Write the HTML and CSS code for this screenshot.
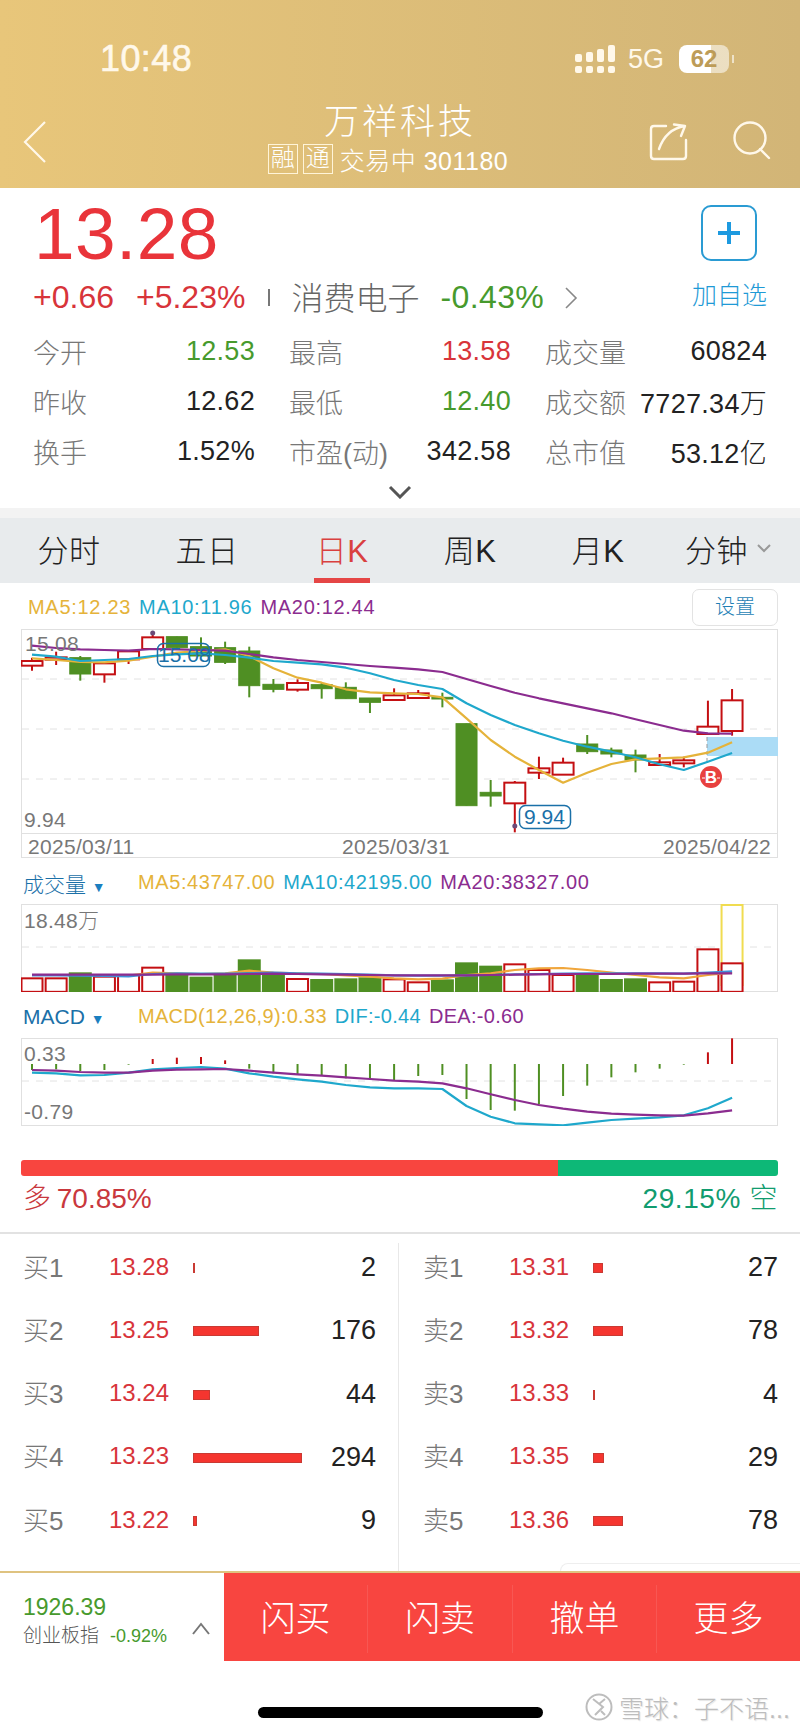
FILE: index.html
```html
<!DOCTYPE html>
<html lang="zh-CN">
<head>
    <meta charset="UTF-8">
    <meta name="viewport" content="width=device-width, initial-scale=1.0">
    <title>万祥科技</title>
    <link rel="stylesheet" href="styles.css">
</head>
<body>
<div class="page">
    <header class="topbar">
        <div class="status">
            <span class="clock">10:48</span>
            <div class="status-right">
                <svg class="signal" viewBox="574 44 40 30" width="40" height="30">
                    <rect x="574" y="54" width="7" height="8" rx="2"/><rect x="585" y="52" width="7" height="10" rx="2"/><rect x="596" y="49" width="7" height="13" rx="2"/><rect x="607" y="45" width="7" height="17" rx="2"/>
                    <rect x="574" y="66" width="7" height="7" rx="2"/><rect x="585" y="66" width="7" height="7" rx="2"/><rect x="596" y="66" width="7" height="7" rx="2"/><rect x="607" y="66" width="7" height="7" rx="2"/>
                </svg>
                <span class="net">5G</span>
                <div class="battery"><span>62</span></div>
                <i class="battery-nub"></i>
            </div>
        </div>
        <div class="nav">
            <svg class="back" viewBox="20 118 30 48" width="30" height="48"><path d="M45 122 L25 142 L45 162"/></svg>
            <div class="nav-title">
                <h1>万祥科技</h1>
                <div class="nav-sub"><b>融</b><b>通</b><span>交易中 301180</span></div>
            </div>
            <div class="nav-icons">
                <svg viewBox="648 120 44 42" width="44" height="42"><path d="M667 126 H655 q-3 0-3 3 V156 q0 3 3 3 H684 q3 0 3-3 V140"/><path d="M660 149 Q667 129 686 126 M675 124.5 L686 126 L682 136"/></svg>
                <svg viewBox="732 120 40 40" width="40" height="40"><circle cx="750" cy="138" r="15.5"/><path d="M760 149 L769 158"/></svg>
            </div>
        </div>
    </header>

    <section class="quote">
        <div class="price-row">
            <div class="price">13.28</div>
            <div class="add-btn"><svg viewBox="0 0 26 26" width="26" height="26"><path d="M13 2 V24 M2 13 H24"/></svg></div>
        </div>
        <div class="change-row">
            <span class="red chg-a">+0.66</span>
            <span class="red chg-b">+5.23%</span>
            <i class="sep"></i>
            <span class="sector">消费电子</span>
            <span class="green chg-c">-0.43%</span>
            <svg class="more" viewBox="0 0 14 24" width="14" height="24"><path d="M2 2 L12 12 L2 22"/></svg>
            <span class="add-text">加自选</span>
        </div>
        <div class="stats">
            <div><label>今开</label><span class="green">12.53</span></div>
            <div><label>最高</label><span class="red">13.58</span></div>
            <div><label>成交量</label><span>60824</span></div>
            <div><label>昨收</label><span>12.62</span></div>
            <div><label>最低</label><span class="green">12.40</span></div>
            <div><label>成交额</label><span>7727.34万</span></div>
            <div><label>换手</label><span>1.52%</span></div>
            <div><label>市盈(动)</label><span>342.58</span></div>
            <div><label>总市值</label><span>53.12亿</span></div>
        </div>
        <div class="expand"><svg viewBox="0 0 24 14" width="24" height="14"><path d="M2 2 L12 12 L22 2"/></svg></div>
    </section>

    <nav class="tabs">
        <a>分时</a>
        <a>五日</a>
        <a class="active"><span>日K</span></a>
        <a>周K</a>
        <a>月K</a>
        <a class="tab-last">分钟<svg viewBox="0 0 14 9" width="14" height="9"><path d="M1 1 L7 7 L13 1"/></svg></a>
    </nav>

    <section class="charts">
        <div class="legend legend-price">
            <span class="ma5">MA5:12.23</span><span class="ma10">MA10:11.96</span><span class="ma20">MA20:12.44</span>
            <a class="setting">设置</a>
        </div>
        <svg class="panel" viewBox="21 629 757 229" width="757" height="229">
            <rect class="frame" x="21.5" y="629.5" width="756" height="228"/>
            <path class="dash" d="M22 679 H777 M22 729 H777 M22 779 H777"/>
            <rect x="707" y="737" width="71" height="19" fill="#abdcf6"/>
            <path class="dash dash-mark" d="M707 737 V762"/>
            <g id="price-shapes"></g>
            <path class="frame" d="M21 833.5 H778"/>
            <text class="axis" x="25" y="651">15.08</text>
            <text class="axis" x="24" y="827">9.94</text>
            <text class="axis" x="28" y="854">2025/03/11</text>
            <text class="axis" x="342" y="854">2025/03/31</text>
            <text class="axis" x="663" y="854">2025/04/22</text>
            <rect class="tag" x="157.5" y="643.5" width="52" height="23" rx="6"/>
            <text class="tag-text" x="158" y="662">15.08</text>
            <rect class="tag" x="519.5" y="805.5" width="51" height="23" rx="6"/>
            <text class="tag-text" x="524" y="824">9.94</text>
            <circle cx="711" cy="777" r="11" fill="#e8413f"/>
            <text class="badge" x="711" y="783">B</text>
            <path class="dash-white" d="M702 778 H722"/>
        </svg>

        <div class="legend">
            <span class="legend-name">成交量 <i>▼</i></span><span class="ma5">MA5:43747.00</span><span class="ma10">MA10:42195.00</span><span class="ma20">MA20:38327.00</span>
        </div>
        <svg class="panel" viewBox="21 904 757 88" width="757" height="88">
            <rect class="frame" x="21.5" y="904.5" width="756" height="87"/>
            <path class="dash" d="M22 947 H777"/>
            <g id="volume-shapes"></g>
            <text class="axis" x="24" y="928">18.48万</text>
        </svg>

        <div class="legend legend-macd">
            <span class="legend-name">MACD <i>▼</i></span><span class="ma5">MACD(12,26,9):0.33</span><span class="ma10">DIF:-0.44</span><span class="ma20">DEA:-0.60</span>
        </div>
        <svg class="panel" viewBox="21 1038 757 88" width="757" height="88">
            <rect class="frame" x="21.5" y="1038.5" width="756" height="87"/>
            <path class="dash" d="M22 1081 H777"/>
            <g id="macd-shapes"></g>
            <text class="axis" x="24" y="1061">0.33</text>
            <text class="axis" x="24" y="1119">-0.79</text>
        </svg>
    </section>

    <section class="sentiment">
        <div class="sent-bar"><i class="sent-long"></i><i class="sent-short"></i></div>
        <div class="sent-text"><span class="long">多 70.85%</span><span class="short">29.15% 空</span></div>
    </section>

    <section class="book">
        <div class="book-col">
            <div class="book-row"><label>买1</label><em>13.28</em><div><i style="width:2px"></i></div><span>2</span></div>
            <div class="book-row"><label>买2</label><em>13.25</em><div><i style="width:66px"></i></div><span>176</span></div>
            <div class="book-row"><label>买3</label><em>13.24</em><div><i style="width:17px"></i></div><span>44</span></div>
            <div class="book-row"><label>买4</label><em>13.23</em><div><i style="width:109px"></i></div><span>294</span></div>
            <div class="book-row"><label>买5</label><em>13.22</em><div><i style="width:4px"></i></div><span>9</span></div>
        </div>
        <div class="book-col">
            <div class="book-row"><label>卖1</label><em>13.31</em><div><i style="width:10px"></i></div><span>27</span></div>
            <div class="book-row"><label>卖2</label><em>13.32</em><div><i style="width:30px"></i></div><span>78</span></div>
            <div class="book-row"><label>卖3</label><em>13.33</em><div><i style="width:2px"></i></div><span>4</span></div>
            <div class="book-row"><label>卖4</label><em>13.35</em><div><i style="width:11px"></i></div><span>29</span></div>
            <div class="book-row"><label>卖5</label><em>13.36</em><div><i style="width:30px"></i></div><span>78</span></div>
        </div>
        <i class="ghost-pill"></i>
    </section>

    <footer class="footer">
        <div class="index">
            <div class="index-text">
                <div class="index-value">1926.39</div>
                <div class="index-name">创业板指<span>-0.92%</span></div>
            </div>
            <svg viewBox="0 0 18 13" width="18" height="13"><path d="M1 12 L9 2 L17 12"/></svg>
        </div>
        <div class="actions">
            <a>闪买</a><a>闪卖</a><a>撤单</a><a>更多</a>
        </div>
    </footer>

    <div class="home"><i></i></div>

    <div class="watermark">
        <svg viewBox="0 0 28 28" width="28" height="28"><circle cx="14" cy="14" r="12.5"/><path d="M8 6 L18 14 L10 22 M20 6 L14 11 M20 22 L16 18"/></svg>
        <span>雪球：子不语...</span>
    </div>
</div>
<script src="chart.js"></script>
</body>
</html>
```

FILE: styles.css
```css
* {
    box-sizing: border-box;
}

body {
    margin: 0;
    background: #fff;
    font-family: "Liberation Sans", "Noto Sans CJK SC", sans-serif;
    font-weight: 300;
    color: #222;
}

a {
    color: inherit;
}

.page {
    position: relative;
    width: 800px;
    height: 1734px;
    overflow: hidden;
}

.red {
    color: #d8343a;
}

.green {
    color: #479a2d;
}

/* top bar */
.topbar {
    height: 188px;
    background: linear-gradient(90deg, #e8c67a, #d2b577);
    color: #fff;
}

.status {
    height: 100px;
    padding: 18px 66px 0 100px;
    display: flex;
    align-items: center;
    justify-content: space-between;
}

.clock {
    font-size: 36px;
    font-weight: 400;
    color: #fff8ea;
    letter-spacing: 0.4px;
    -webkit-text-stroke: 0.6px #fff8ea;
}

.status-right {
    display: flex;
    align-items: center;
}

.signal {
    fill: #fff8ea;
}

.net {
    margin-left: 13px;
    font-size: 27px;
    color: #fff8ea;
}

.battery {
    width: 50px;
    height: 28px;
    margin-left: 15px;
    border-radius: 8px;
    background: linear-gradient(90deg, #fff 64%, rgba(255, 255, 255, 0.55) 64%);
    color: #bd9c57;
    font-size: 24px;
    font-weight: 700;
    line-height: 28px;
    text-align: center;
}

.battery-nub {
    width: 2px;
    height: 8px;
    margin-left: 3px;
    background: rgba(255, 255, 255, 0.6);
}

.nav {
    height: 88px;
    display: grid;
    grid-template-columns: 1fr auto 1fr;
    align-items: start;
}

.back {
    margin: 18px 0 0 20px;
    fill: none;
    stroke: #fff8ea;
    stroke-width: 2.2;
}

.nav-title {
    text-align: center;
}

.nav-title h1 {
    margin: 0;
    height: 44px;
    font-size: 35px;
    font-weight: 300;
    line-height: 44px;
    letter-spacing: 3px;
}

.nav-sub {
    margin: -1px 24px 0 0;
    display: flex;
    align-items: center;
    justify-content: center;
    height: 32px;
}

.nav-sub b {
    width: 30px;
    height: 30px;
    margin-right: 5px;
    border: 1px solid #fff4d8;
    font-size: 24px;
    font-weight: 300;
    line-height: 26px;
    text-align: center;
}

.nav-sub span {
    margin-left: 2px;
    font-size: 25px;
    letter-spacing: 0.5px;
}

.nav-icons {
    margin-top: 20px;
    padding-right: 28px;
    display: flex;
    justify-content: flex-end;
    gap: 41px;
}

.nav-icons svg {
    fill: none;
    stroke: #fff8ea;
    stroke-width: 2.4;
    stroke-linecap: round;
    stroke-linejoin: round;
}

/* quote block */
.quote {
    height: 320px;
    padding: 0 33px;
}

.price-row {
    height: 84px;
    padding: 0 10px 0 0;
    display: flex;
    justify-content: space-between;
    align-items: flex-start;
}

.price {
    margin: 4px 0 0 1px;
    font-size: 73px;
    font-weight: 400;
    letter-spacing: 0.4px;
    line-height: 84px;
    color: #e9343a;
}

.add-btn {
    width: 56px;
    height: 56px;
    margin-top: 17px;
    border: 2px solid #2a9bd3;
    border-radius: 10px;
    display: flex;
    align-items: center;
    justify-content: center;
}

.add-btn svg {
    stroke: #1d9ae0;
    stroke-width: 4;
}

.change-row {
    height: 54px;
    padding-bottom: 3px;
    display: flex;
    align-items: center;
    font-size: 32px;
}

.chg-b {
    margin-left: 22px;
}

.sep {
    width: 2px;
    height: 17px;
    margin-left: 23px;
    background: #777;
}

.sector {
    margin: 0 0 4px 21px;
    color: #666;
    font-size: 32px;
}

.chg-c {
    margin-left: 21px;
    letter-spacing: 0.4px;
}

.more {
    margin-left: 20px;
    fill: none;
    stroke: #888;
    stroke-width: 1.6;
}

.add-text {
    margin: 0 0 10px auto;
    color: #1f9ad6;
    font-size: 25px;
}

.stats {
    display: grid;
    grid-template-columns: repeat(3, 222px);
    grid-auto-rows: 50px;
    column-gap: 34px;
}

.stats div {
    display: flex;
    align-items: center;
    justify-content: space-between;
    font-size: 27px;
    white-space: nowrap;
}

.stats label {
    color: #777;
}

.stats span {
    letter-spacing: 0.3px;
}

.expand {
    height: 32px;
    display: flex;
    align-items: center;
    justify-content: center;
}

.expand svg {
    fill: none;
    stroke: #555;
    stroke-width: 3;
}

/* period tabs */
.tabs {
    height: 75px;
    border-top: 10px solid #f3f3f3;
    background: #e8ebed;
    display: grid;
    grid-template-columns: 138px 138px 132px 124px 132px 136px;
    font-size: 31px;
    letter-spacing: 0.5px;
    text-align: center;
}

.tabs a {
    padding-bottom: 4px;
    display: flex;
    align-items: center;
    justify-content: center;
}

.tabs svg {
    margin-left: 9px;
    fill: none;
    stroke: #999;
    stroke-width: 2;
}

.tabs .tab-last {
    padding-right: 8px;
}

.tabs .active {
    padding-bottom: 0;
    color: #d9403f;
}

.tabs .active span {
    height: 100%;
    padding: 0 2px;
    display: flex;
    align-items: center;
    border-bottom: 5px solid #e54646;
}

/* chart panels */
.charts {
    height: 543px;
}

.legend {
    height: 46px;
    padding: 3px 0 0 23px;
    display: flex;
    align-items: center;
    gap: 8px;
    font-size: 20px;
    letter-spacing: 0.6px;
    white-space: nowrap;
}

.legend-price {
    padding: 2px 22px 0 28px;
    letter-spacing: 0.7px;
}

.legend-macd {
    letter-spacing: 0.3px;
}

.legend-name {
    width: 107px;
    color: #1a70a8;
    font-size: 21px;
    letter-spacing: 0;
}

.legend-name i {
    font-size: 14px;
    font-style: normal;
    color: #1a7fc0;
}

.ma5 {
    color: #e5b33a;
}

.ma10 {
    color: #1fa8cc;
}

.ma20 {
    color: #8b2c8f;
}

.setting {
    width: 86px;
    height: 37px;
    margin-left: auto;
    border: 1px solid #e3e3e3;
    border-radius: 7px;
    color: #1f7fb5;
    letter-spacing: 0;
    line-height: 35px;
    text-align: center;
}

.panel {
    display: block;
    margin-left: 21px;
}

.frame {
    fill: none;
    stroke: #e0e0e0;
}

.dash {
    fill: none;
    stroke: #e2e2e2;
    stroke-dasharray: 7 7;
}

.dash-mark {
    stroke: #999;
    stroke-dasharray: 4 3;
}

.dash-white {
    fill: none;
    stroke: #fff;
    stroke-dasharray: 3 2;
}

.axis {
    font-size: 21px;
    letter-spacing: 0.3px;
    fill: #777;
}

.tag {
    fill: none;
    stroke: #1a70a8;
    stroke-width: 1.5;
}

.tag-text {
    font-size: 21px;
    fill: #1a70a8;
}

.badge {
    font-size: 17px;
    font-weight: 700;
    fill: #fff;
    text-anchor: middle;
}

/* long / short bar */
.sentiment {
    height: 108px;
    padding: 34px 22px 0 21px;
    border-bottom: 2px solid #e2e2e2;
}

.sent-bar {
    height: 16px;
    border-radius: 3px;
    overflow: hidden;
    display: flex;
}

.sent-long {
    width: 537px;
    background: #f8453f;
}

.sent-short {
    flex: 1;
    background: #0db877;
}

.sent-text {
    padding: 0 0 0 2px;
    display: flex;
    justify-content: space-between;
    font-size: 28px;
}

.long {
    color: #c9383d;
    word-spacing: -2px;
}

.short {
    color: #119c6f;
    letter-spacing: 0.6px;
}

/* order book */
.book {
    position: relative;
    height: 337px;
    padding-top: 1px;
    display: grid;
    grid-template-columns: 399px 401px;
}

.book-col {
    padding: 0 22px 0 24px;
}

.book-col:first-child {
    margin-top: 8px;
    padding-left: 23px;
    border-right: 1px solid #e8e8e8;
}

.book-col:first-child .book-row:first-child {
    margin-top: -8px;
}

.book-row {
    height: 63.25px;
    display: grid;
    grid-template-columns: 86px 84px 1fr auto;
    align-items: center;
}

.book-row label {
    margin-top: -3px;
    color: #777;
    font-size: 26px;
}

.book-row em {
    color: #d8343a;
    font-size: 24px;
    font-style: normal;
}

.book-row div {
    display: flex;
    padding-top: 3px;
}

.book-row i {
    height: 10px;
    background: #f5352f;
    border: 1px solid #c93a33;
}

.book-row span {
    padding-top: 2px;
    font-size: 27px;
}

.ghost-pill {
    position: absolute;
    right: -8px;
    bottom: 0;
    width: 248px;
    height: 8px;
    border: 1px solid #eee;
    border-bottom: 0;
    border-radius: 8px 8px 0 0;
}

/* bottom actions */
.footer {
    height: 90px;
    border-top: 2px solid #dfc380;
    display: flex;
}

.index {
    width: 224px;
    padding: 20px 14px 0 23px;
    display: flex;
    justify-content: space-between;
}

.index-value {
    height: 28px;
    color: #479a2d;
    font-size: 23px;
    line-height: 28px;
}

.index-name {
    margin-top: 1px;
    font-size: 19px;
    line-height: 28px;
    color: #555;
    white-space: nowrap;
}

.index-name span {
    margin-left: 11px;
    color: #479a2d;
    font-size: 18px;
}

.index svg {
    margin-top: 29px;
    fill: none;
    stroke: #777;
    stroke-width: 2;
}

.actions {
    flex: 1;
    padding: 12px 0 8px;
    background: #f84540;
    display: grid;
    grid-template-columns: 143px 145px 144px 144px;
    color: #fff;
    font-size: 35px;
}

.actions a {
    padding-bottom: 8px;
    display: flex;
    align-items: center;
    justify-content: center;
    border-left: 1px solid rgba(255, 255, 255, 0.1);
}

.actions a:first-child {
    border-left: 0;
}

/* home indicator */
.home {
    padding-top: 46px;
    display: flex;
    justify-content: center;
}

.home i {
    width: 285px;
    height: 11px;
    border-radius: 6px;
    background: #000;
}

.watermark {
    position: absolute;
    left: 585px;
    top: 1689px;
    display: flex;
    align-items: center;
    gap: 6px;
    color: #bdbdbd;
    font-size: 25px;
    white-space: nowrap;
    text-shadow: 1px 1px 1px #e4e4e4;
}

.watermark svg {
    fill: none;
    stroke: #bdbdbd;
    stroke-width: 2;
}
```

FILE: chart.js
```js
// y values are in thirds of a pixel, counted from the top of each chart's base line
const SVG_NS = 'http://www.w3.org/2000/svg';
const PRICE_BASE = 580;
const VOL_BASE = 860;

const RED = '#c40f12';
const GREEN = '#4f8f23';
const YELLOW = '#e5b33a';
const CYAN = '#1fa8cc';
const PURPLE = '#8b2c8f';

const xAt = i => 32 + i * 24.14;

function add(group, tag, attrs) {
    const node = document.createElementNS(SVG_NS, tag);
    for (const key in attrs) node.setAttribute(key, attrs[key]);
    group.appendChild(node);
    return node;
}

function drawLine(group, values, base, color, width) {
    const points = values.map((v, i) => xAt(i).toFixed(1) + ',' + (base + v / 3).toFixed(1));
    add(group, 'polyline', {
        points: points.join(' '), fill: 'none', stroke: color,
        'stroke-width': width || 2.2, 'stroke-linejoin': 'round'
    });
}

// [up?, bodyTop, bodyBottom, wickTop, wickBottom]
const candles = [
    [1, 243, 257, 233, 272], [1, 232, 239, 215, 255], [0, 233, 282, 228, 302], [1, 250, 283, 250, 308],
    [1, 214, 238, 214, 252], [1, 172, 207, 155, 207], [0, 170, 203, 170, 203], [0, 200, 228, 172, 228],
    [0, 203, 247, 185, 252], [0, 213, 317, 200, 352], [0, 313, 328, 297, 337], [1, 309, 329, 298, 335],
    [0, 314, 326, 307, 356], [0, 322, 356, 307, 356], [0, 354, 367, 354, 399], [1, 346, 360, 325, 360],
    [1, 340, 354, 330, 354], [0, 352, 357, 338, 382], [0, 431, 677, 431, 677], [0, 637, 648, 600, 680],
    [1, 608, 670, 603, 757], [1, 565, 578, 530, 597], [1, 548, 584, 533, 584], [0, 492, 515, 465, 522],
    [0, 510, 522, 503, 532], [0, 525, 540, 509, 577], [1, 547, 555, 522, 556], [1, 541, 550, 530, 562],
    [1, 440, 462, 362, 462], [1, 361, 453, 327, 467]
];

const priceMa5 = [235, 240, 246, 247, 242, 230, 218, 213, 208, 228, 265, 293, 308, 328, 337, 340,
    342, 352, 415, 480, 530, 570, 608, 578, 552, 538, 535, 532, 518, 487];
const priceMa10 = [224, 230, 243, 240, 237, 228, 223, 220, 225, 233, 243, 248, 253, 263, 280, 300,
    315, 327, 370, 405, 435, 460, 482, 500, 515, 532, 553, 570, 545, 519];
const priceMa20 = [197, 204, 208, 210, 212, 207, 208, 210, 212, 222, 232, 240, 246, 252, 258, 263,
    268, 276, 297, 318, 338, 355, 370, 385, 400, 418, 435, 452, 460, 461];

const priceGroup = document.getElementById('price-shapes');
candles.forEach((c, i) => {
    const x = xAt(i);
    const [up, top, bottom, wickTop, wickBottom] = c;
    const color = up ? RED : GREEN;
    add(priceGroup, 'line', {
        x1: x, x2: x, y1: PRICE_BASE + wickTop / 3, y2: PRICE_BASE + wickBottom / 3,
        stroke: color, 'stroke-width': 2
    });
    add(priceGroup, 'rect', {
        x: x - 10.5, y: PRICE_BASE + top / 3, width: 21, height: (bottom - top) / 3,
        fill: up ? '#fff' : GREEN, stroke: color, 'stroke-width': up ? 2 : 1
    });
});
// marks on the high and low candles
add(priceGroup, 'circle', { cx: xAt(5), cy: 633, r: 2.5, fill: '#6b4a78' });
add(priceGroup, 'circle', { cx: xAt(20), cy: 826, r: 2.5, fill: '#6b4a78' });
drawLine(priceGroup, priceMa5, PRICE_BASE, YELLOW);
drawLine(priceGroup, priceMa10, PRICE_BASE, CYAN);
drawLine(priceGroup, priceMa20, PRICE_BASE, PURPLE);

// volume: [up?, top]
const volumes = [
    [1, 355], [1, 355], [0, 337], [1, 350], [1, 345], [1, 323], [0, 345], [0, 350], [0, 345], [0, 298],
    [0, 345], [1, 357], [0, 357], [0, 355], [0, 352], [1, 358], [1, 367], [0, 358], [0, 307], [0, 317],
    [1, 313], [1, 330], [1, 345], [0, 340], [0, 357], [0, 355], [1, 367], [1, 365], [1, 268], [1, 310]
];
const volMa5 = [345, 345, 345, 345, 347, 338, 340, 342, 340, 332, 338, 340, 342, 346, 350, 355,
    358, 356, 345, 340, 330, 325, 324, 330, 338, 345, 352, 355, 345, 338];
const volMa10 = [346, 346, 347, 348, 349, 342, 340, 341, 341, 340, 338, 340, 341, 342, 344, 346,
    347, 347, 346, 345, 343, 342, 341, 340, 340, 340, 340, 341, 338, 334];
const volMa20 = [344, 344, 344, 344, 344, 344, 343, 343, 343, 342, 341, 342, 343, 344, 345, 346,
    346, 346, 346, 345, 344, 343, 342, 342, 342, 341, 341, 341, 340, 340];

const volGroup = document.getElementById('volume-shapes');
add(volGroup, 'rect', {
    x: xAt(29) - 10.5, y: 905, width: 21, height: 80, fill: '#fff', stroke: '#f0dc50', 'stroke-width': 2
});
volumes.forEach((v, i) => {
    const x = xAt(i);
    const top = VOL_BASE + v[1] / 3;
    const bottom = VOL_BASE + 397 / 3;
    if (v[0]) {
        add(volGroup, 'rect', {
            x: x - 10.5, y: top, width: 21, height: bottom - top - 0.5,
            fill: '#fff', stroke: RED, 'stroke-width': 2
        });
    } else {
        add(volGroup, 'rect', { x: x - 11.5, y: top, width: 23, height: bottom - top, fill: GREEN });
    }
});
drawLine(volGroup, volMa5, VOL_BASE, '#f0a63c');
drawLine(volGroup, volMa10, VOL_BASE, '#3f8fd8');
drawLine(volGroup, volMa20, VOL_BASE, PURPLE);

// macd bars are measured from the zero line at 612
const macdBars = [630, 628, 633, 630, 614, 597, 593, 591, 601, 626, 640, 645, 648, 655, 660, 660,
    648, 645, 717, 750, 752, 733, 708, 677, 652, 637, 626, 614, 577, 535];
const dif = [638, 640, 646, 645, 638, 628, 624, 621, 626, 640, 650, 658, 665, 675, 682, 685,
    685, 687, 738, 770, 790, 793, 796, 788, 780, 776, 772, 766, 745, 713];
const dea = [630, 632, 636, 638, 638, 632, 629, 628, 627, 632, 638, 643, 647, 652, 657, 662,
    665, 670, 685, 703, 720, 735, 746, 755, 761, 764, 766, 767, 760, 751];

const macdGroup = document.getElementById('macd-shapes');
macdBars.forEach((end, i) => {
    const x = xAt(i);
    add(macdGroup, 'line', {
        x1: x, x2: x, y1: VOL_BASE + 612 / 3, y2: VOL_BASE + end / 3,
        stroke: end < 612 ? RED : GREEN, 'stroke-width': 2
    });
});
drawLine(macdGroup, dif, VOL_BASE, CYAN);
drawLine(macdGroup, dea, VOL_BASE, PURPLE);
```
